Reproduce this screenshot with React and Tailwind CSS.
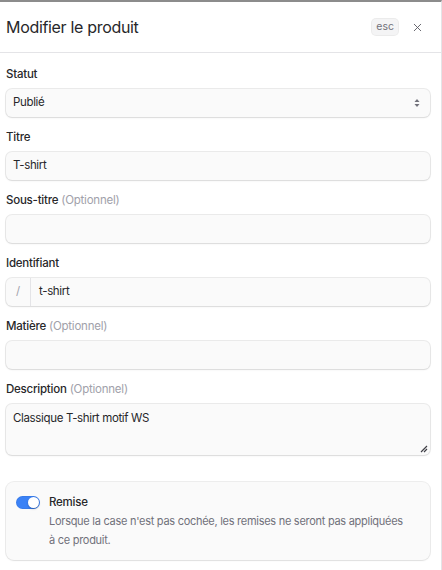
import { X } from "lucide-react";

const inputBox =
  "h-7 w-full rounded-md bg-[#fafafa] shadow-[0_0_0_1px_rgba(0,0,0,0.08),0_1px_2px_rgba(0,0,0,0.08)]";

function Label({ children, optional }) {
  return (
    <div className="text-[11.5px] font-medium leading-5 tracking-[-0.02em] text-[#27272a]">
      {children}
      {optional ? <span className="font-normal text-[#a1a1aa]"> (Optionnel)</span> : null}
    </div>
  );
}

function Field({ label, optional, children }) {
  return (
    <div className="flex flex-col gap-[5px]">
      <Label optional={optional}>{label}</Label>
      {children}
    </div>
  );
}

function TextInput({ value }) {
  return (
    <div className={`${inputBox} flex items-center px-[7px] text-[11.5px] tracking-[-0.03em] text-[#27272a]`}>
      {value}
    </div>
  );
}

export default function App() {
  return (
    <div className="h-[570px] w-[442px] overflow-hidden border-t-2 border-r border-t-[#8c8c8c] border-r-[#e4e4e7] bg-white font-['Inter',sans-serif]">
      <header className="flex h-[51px] items-center justify-between border-b border-[#e4e4e7] pl-[6px] pr-[17px]">
        <h1 className="text-[16px] font-normal tracking-[-0.02em] text-[#27272a]">Modifier le produit</h1>
        <div className="flex items-center gap-[13px]">
          <span className="flex h-[16px] items-center rounded-[4px] bg-[#f4f4f5] px-[4px] text-[10.5px] text-[#71717a] shadow-[0_0_0_1px_rgba(0,0,0,0.08)]">
            esc
          </span>
          <X className="h-[13px] w-[13px] text-[#52525b]" strokeWidth={1.6} />
        </div>
      </header>

      <div className="flex flex-col gap-[10px] pl-[6px] pr-[11px] pt-[11px]">
        <Field label="Statut">
          <div className={`${inputBox} flex items-center justify-between px-[7px] text-[11.5px] tracking-[-0.03em] text-[#27272a]`}>
            <span>Publié</span>
            <svg width="8" height="12" viewBox="0 0 8 12" className="mr-[2px]">
              <path d="M4 2 L6.5 5 H1.5 Z" fill="#71717a" />
              <path d="M4 10 L6.5 7 H1.5 Z" fill="#71717a" />
            </svg>
          </div>
        </Field>

        <Field label="Titre">
          <TextInput value="T-shirt" />
        </Field>

        <Field label="Sous-titre" optional>
          <TextInput value="" />
        </Field>

        <Field label="Identifiant">
          <div className={`${inputBox} flex items-center text-[11.5px] tracking-[-0.03em] text-[#27272a]`}>
            <span className="flex h-full w-[25px] items-center justify-center border-r border-[#e4e4e7] text-[#a1a1aa]">
              /
            </span>
            <span className="pl-[8px]">t-shirt</span>
          </div>
        </Field>

        <Field label="Matière" optional>
          <TextInput value="" />
        </Field>

        <Field label="Description" optional>
          <div className="relative h-[51px] w-full rounded-md bg-[#fafafa] px-[7px] py-[4px] text-[11.5px] leading-5 tracking-[-0.03em] text-[#27272a] shadow-[0_0_0_1px_rgba(0,0,0,0.08),0_1px_2px_rgba(0,0,0,0.08)]">
            Classique T-shirt motif WS
            <svg width="8" height="8" viewBox="0 0 8 8" className="absolute bottom-[2px] right-[2px]">
              <path d="M1 7 L7 1 M4 7 L7 4" stroke="#3f3f46" strokeWidth="1.2" />
            </svg>
          </div>
        </Field>

        <div className="mt-[17px] flex gap-[9px] rounded-lg bg-[#fafafa] px-[10px] pb-[10px] pt-[11px] shadow-[0_0_0_1px_rgba(0,0,0,0.07),0_1px_2px_rgba(0,0,0,0.06)]">
          <div className="mt-[3px] flex h-[13px] w-[24px] shrink-0 items-center justify-end rounded-full bg-[#3b82f6] px-[1px] shadow-[inset_0_0_0_1px_rgba(0,0,0,0.05)]">
            <div className="h-[11px] w-[11px] rounded-full bg-white shadow-[0_1px_2px_rgba(0,0,0,0.25)]" />
          </div>
          <div className="flex flex-col">
            <div className="text-[11.5px] font-medium leading-[18px] tracking-[-0.02em] text-[#27272a]">Remise</div>
            <p className="mt-[1px] max-w-[362px] text-[11px] leading-[19px] tracking-[-0.025em] text-[#71717a]">
              Lorsque la case n'est pas cochée, les remises ne seront pas appliquées à ce produit.
            </p>
          </div>
        </div>
      </div>
    </div>
  );
}
